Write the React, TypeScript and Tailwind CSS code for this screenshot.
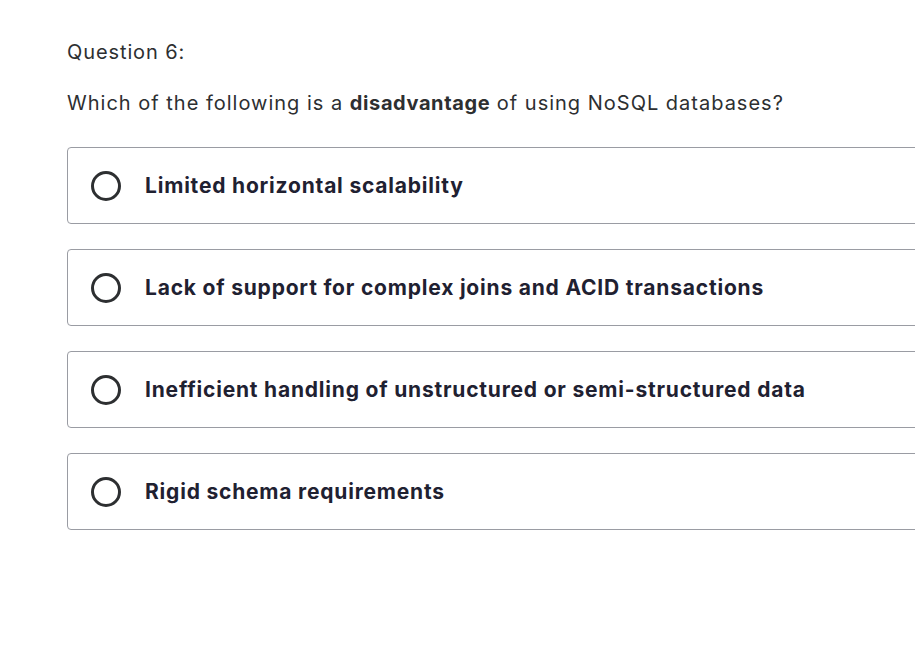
import React from 'react';

const options = [
  'Limited horizontal scalability',
  'Lack of support for complex joins and ACID transactions',
  'Inefficient handling of unstructured or semi-structured data',
  'Rigid schema requirements',
];

export default function App() {
  return (
    <div className="h-[666px] w-[915px] overflow-hidden bg-white font-['Inter',sans-serif] text-[#2d2f31]">
      <div className="w-[880px] pl-[67px] pt-[38px]">
        <div className="text-[20px] leading-[28px] tracking-[0.9px]">Question 6:</div>
        <div className="mt-[23px] text-[20px] leading-[28px] tracking-[1px]">
          Which of the following is a <span className="font-bold tracking-[0.6px]">disadvantage</span> of using NoSQL databases?
        </div>
        <div className="mt-[30px] flex flex-col gap-[25px]">
          {options.map((opt) => (
            <div
              key={opt}
              className="flex h-[77px] w-[900px] items-center rounded-[4px] border border-[#9a9ca3] pl-[23px]"
            >
              <span className="h-[30px] w-[30px] shrink-0 rounded-full border-[3px] border-[#2d2f31]" />
              <span className="ml-[24px] text-[21px] font-bold tracking-[0.8px] text-[#1f2131]">{opt}</span>
            </div>
          ))}
        </div>
      </div>
    </div>
  );
}
